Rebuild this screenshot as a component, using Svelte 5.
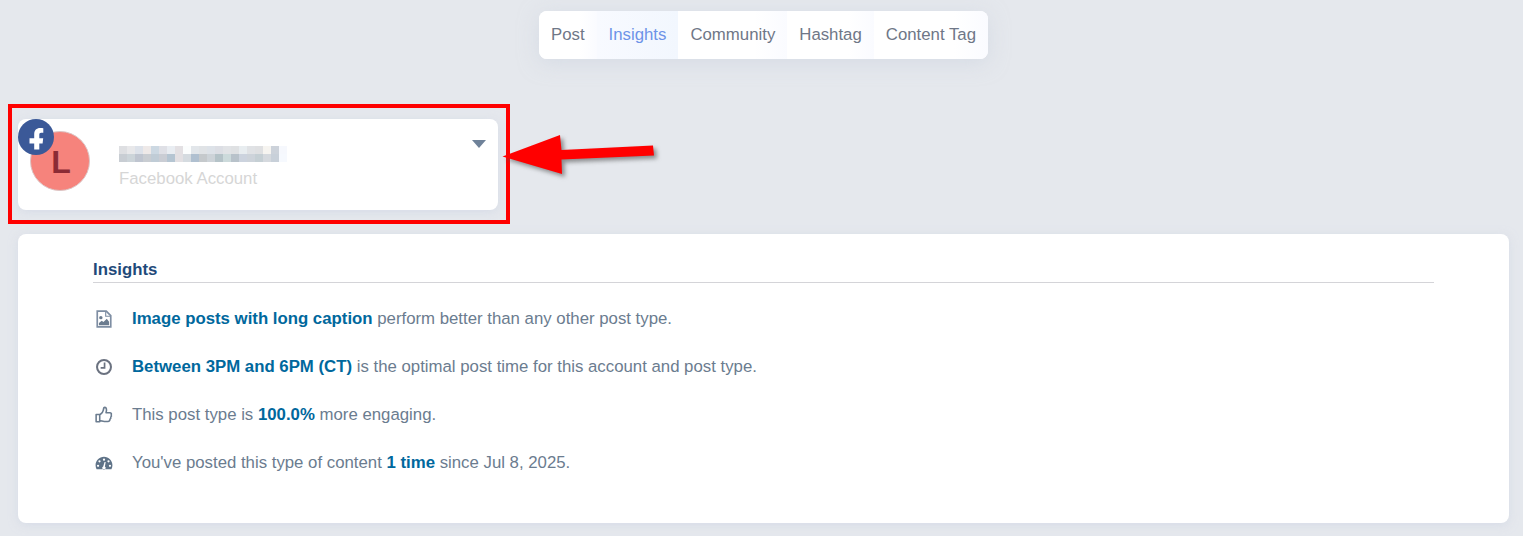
<script>
  const tabs = ["Post", "Insights", "Community", "Hashtag", "Content Tag"];
  let active = "Insights";

  // pixelated account name, two rows of mosaic blocks
  const blurTop = ["#dedfe2","#e8e8ea","#dde2ea","#eee9e8","#ccd8e2","#dfe0e6","#e9edf2","#e3e0e3","#fbfdfd","#e2e6ea","#e0e3e6","#dde2e8","#dcdee4","#e1e3e6","#dfe1e3","#e8edf0","#e0e2e5","#dfe0e2","#f6f4f0","#ccd2da","#f6f8fd"];
  const blurBottom = ["#c8cdd3","#ccd4d9","#bfc5d0","#c9cdd2","#c0ccd6","#cacdd4","#b5c5d2","#e3e0e3","#d5dbe0","#b0c0d0","#c5c9cc","#cdd3d8","#b5c3c8","#ccdadb","#b8c2ca","#ccd3de","#cdd3da","#c5cfd4","#d5d9de","#c8d0d9","#f6f9fe"];
</script>

<div class="page">
  <nav class="tabs">
    {#each tabs as tab}
      <button class="tab" class:active={tab === active} onclick={() => (active = tab)}>{tab}</button>
    {/each}
  </nav>

  <section class="account">
    <div class="avatar">L</div>
    <div class="fb">
      <svg viewBox="0 0 36 36" width="36" height="36">
        <path fill="#fff" d="M16.200 30.500V24.500H11.500v-5.200h4.700v-4.100c0-4.100 2.400-6.200 5.900-6.200 1.300 0 2.500.1 3.200.2v4.600h-2.100c-1.500 0-1.900.8-1.900 2v3.500h3.900l-.6 5.200h-3.300v6z" />
      </svg>
    </div>
    <div class="who">
      <svg class="name" viewBox="0 0 168 16" width="168" height="16" shape-rendering="crispEdges">
        {#each blurTop as c, i}
          <rect x={i * 8} y="0" width="8" height="8" fill={c} />
        {/each}
        {#each blurBottom as c, i}
          <rect x={i * 8} y="8" width="8" height="8" fill={c} />
        {/each}
      </svg>
      <div class="type">Facebook Account</div>
    </div>
    <span class="caret"></span>
  </section>

  <section class="panel">
    <h3>Insights</h3>
    <ul>
      <li>
        <svg class="icon" viewBox="0 0 16 16">
          <path fill="none" stroke="#7e8ea3" stroke-width="1.500" d="M2 1h8l4 4v10H2z" />
          <path fill="none" stroke="#7e8ea3" d="M9.500 1v4.500H14" />
          <circle cx="5.200" cy="6.800" r="1.500" fill="#6b7c8f" />
          <path fill="#6b7c8f" d="M3.500 13.500v-2L6 9.500l1.500 1.200L10.500 7.800l2 2.700v3z" />
        </svg>
        <span><b>Image posts with long caption</b> perform better than any other post type.</span>
      </li>
      <li>
        <svg class="icon" viewBox="0 0 16 16">
          <circle cx="8" cy="8" r="6.200" fill="none" stroke="#6b7280" stroke-width="1.800" />
          <path fill="none" stroke="#6b7280" stroke-width="1.500" d="M8.500 4v4.700H5" />
        </svg>
        <span><b>Between 3PM and 6PM (CT)</b> is the optimal post time for this account and post type.</span>
      </li>
      <li>
        <svg class="icon" viewBox="0 0 16 16">
          <path fill="none" stroke="#6b7c8f" stroke-width="1.400" stroke-linejoin="round" d="M1 7.500h3.200V14H1zM4.200 8c1.500-1 3-2.500 3.300-4.500 0-1.500.4-2.300 1.300-2.300 1.400 0 1.800 2 1 4.800h3.400c1.200 0 1.700 1 1.200 1.900.4.800.2 1.600-.4 2 .2.800-.1 1.500-.7 1.800.1 1.200-.6 2-1.800 2H8.200c-1.500 0-2.500-.7-4-.8" />
        </svg>
        <span>This post type is <b>100.0%</b> more engaging.</span>
      </li>
      <li>
        <svg class="icon" viewBox="0 0 16 16">
          <path fill="#5f7388" fill-rule="evenodd" d="M8 2.500C3.800 2.500.500 5.800.500 10c0 1.300.3 2.400.9 3.500h13.200c.6-1.100.9-2.200.9-3.500 0-4.200-3.300-7.500-7.500-7.500zM8 4a1 1 0 1 1 0 2 1 1 0 0 1 0-2zM4 5.500a1 1 0 1 1 0 2 1 1 0 0 1 0-2zm8 0a1 1 0 1 1 0 2 1 1 0 0 1 0-2zM2.700 9.500a1 1 0 1 1 0 2 1 1 0 0 1 0-2zm10.600 0a1 1 0 1 1 0 2 1 1 0 0 1 0-2zM9.500 7l-.7 4.200a1.500 1.500 0 1 1-1.500-.1L8.500 7z" />
        </svg>
        <span>You've posted this type of content <b>1 time</b> since Jul 8, 2025.</span>
      </li>
    </ul>
  </section>

  <!-- annotation drawn over the screenshot -->
  <div class="highlight"></div>
  <svg class="arrow" viewBox="0 0 170 60" width="170" height="60">
    <polygon fill="#f00" points="2.500,26.500 60,5 61.500,20 153,15.500 154,25.500 61.500,29.500 62,44" />
  </svg>
</div>

<style>
  :global(body) {
    background: #e5e8ed;
    font-family: "Liberation Sans", Arial, sans-serif;
  }
  .page {
    position: relative;
    box-sizing: border-box;
    height: 536px;
    overflow: hidden;
    padding: 11px 14px 0 18px;
    display: flex;
    flex-direction: column;
    color: #6b7c8f;
  }
  .tabs {
    align-self: center;
    display: flex;
    height: 48px;
    background: #fff;
    border-radius: 8px;
    overflow: hidden;
    box-shadow: 0 4px 20px rgba(200, 208, 222, 0.5);
  }
  .tab {
    border: 0;
    background: linear-gradient(90deg, #fff 70%, #fafbff);
    padding: 0 12px;
    font: 16.8px "Liberation Sans", Arial, sans-serif;
    color: #6f7787;
    cursor: pointer;
  }
  .tab.active {
    background: linear-gradient(90deg, #f8faff, #f2f7fe);
    color: #6d93e8;
  }
  .account {
    position: relative;
    margin-top: 60px;
    width: 480px;
    height: 91px;
    box-sizing: border-box;
    padding: 12px 12px 0 12px;
    display: flex;
    background: #fff;
    border-radius: 8px;
    box-shadow: 0 2px 10px rgba(205, 212, 226, 0.6);
  }
  .avatar {
    width: 60px;
    height: 60px;
    box-sizing: border-box;
    border: 1px solid #dcc5c5;
    border-radius: 50%;
    background: #f6837c;
    color: #8b2b35;
    font-size: 32px;
    font-weight: 700;
    display: flex;
    align-items: center;
    justify-content: center;
    padding: 2px 0 0 2px;
  }
  .fb {
    position: absolute;
    left: 0;
    top: 0;
    width: 36px;
    height: 36px;
    border-radius: 50%;
    background: #3b5998;
  }
  .fb svg {
    display: block;
  }
  .who {
    margin-left: 29px;
    padding-top: 15px;
  }
  .name {
    display: block;
  }
  .type {
    margin-top: 8px;
    font-size: 16.8px;
    line-height: 18px;
    color: #d6d6d6;
  }
  .caret {
    position: absolute;
    right: 12px;
    top: 21px;
    width: 0;
    height: 0;
    border-left: 7px solid transparent;
    border-right: 7px solid transparent;
    border-top: 8px solid #6f8299;
  }
  .panel {
    margin-top: 24px;
    height: 289px;
    box-sizing: border-box;
    padding: 0 75px;
    background: #fff;
    border-radius: 8px;
    box-shadow: 0 2px 10px rgba(205, 212, 226, 0.6);
  }
  h3 {
    margin: 0;
    height: 49px;
    box-sizing: border-box;
    padding-top: 27px;
    font-size: 16.8px;
    line-height: 18px;
    font-weight: 700;
    color: #1f4a7a;
    border-bottom: 1px solid #d4d4d8;
  }
  ul {
    list-style: none;
    margin: 0;
    padding: 12px 0 0;
  }
  li {
    height: 48px;
    display: flex;
    align-items: center;
    font-size: 16.8px;
  }
  .icon {
    width: 18px;
    height: 18px;
    margin: 0 19px 0 2px;
    flex: none;
  }
  b {
    color: #00689d;
  }
  .highlight {
    position: absolute;
    left: 8px;
    top: 104px;
    width: 502px;
    height: 120px;
    box-sizing: border-box;
    border: 4px solid #f00;
  }
  .arrow {
    position: absolute;
    left: 500px;
    top: 130px;
    filter: drop-shadow(3px 3px 2px rgba(80, 80, 80, 0.6));
  }
</style>
